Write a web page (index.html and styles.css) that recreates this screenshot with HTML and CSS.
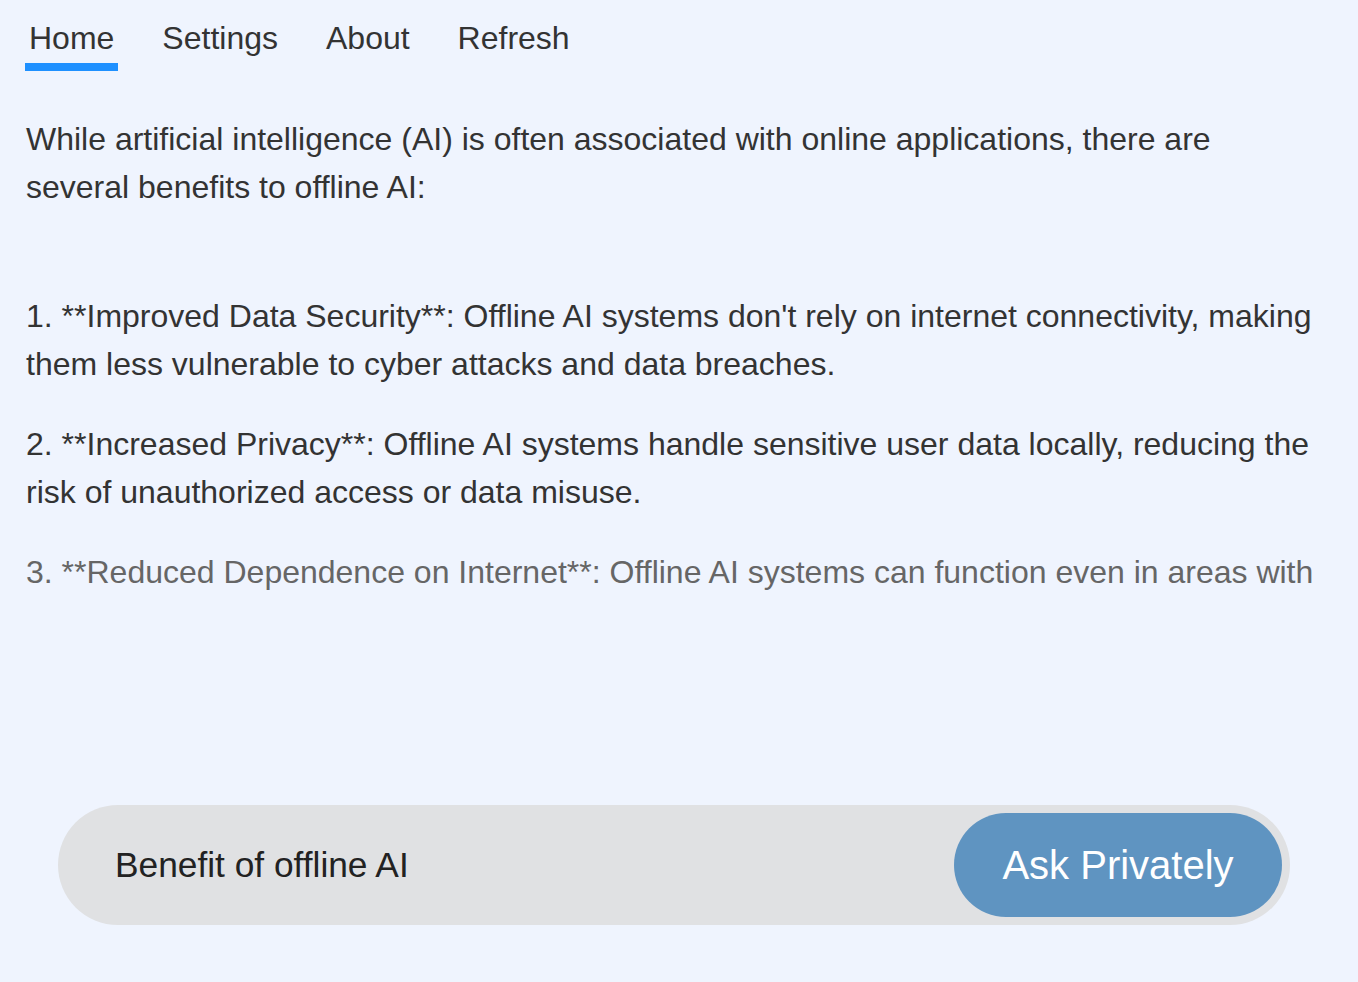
FILE: index.html
```html
<!DOCTYPE html>
<html lang="en">
<head>
<meta charset="utf-8">
<title>Offline AI</title>
<link rel="stylesheet" href="styles.css">
</head>
<body>
<div class="app">
  <nav class="tabs">
    <a class="tab active">Home</a>
    <a class="tab">Settings</a>
    <a class="tab">About</a>
    <a class="tab">Refresh</a>
  </nav>
  <main class="answer">
    <p class="intro">While artificial intelligence (AI) is often associated with online applications, there are several benefits to offline AI:</p>
    <p>1. **Improved Data Security**: Offline AI systems don't rely on internet connectivity, making them less vulnerable to cyber attacks and data breaches.</p>
    <p>2. **Increased Privacy**: Offline AI systems handle sensitive user data locally, reducing the risk of unauthorized access or data misuse.</p>
    <p class="fading">3. **Reduced Dependence on Internet**: Offline AI systems can function even in areas with</p>
  </main>
  <footer class="composer">
    <div class="ask-bar">
      <span class="query">Benefit of offline AI</span>
      <button class="ask-btn">Ask Privately</button>
    </div>
  </footer>
</div>
</body>
</html>
```

FILE: styles.css
```css
html, body {
  margin: 0;
  padding: 0;
  background: #eff4fe;
}
body {
  font-family: "Liberation Sans", Arial, sans-serif;
  color: #333333;
}
.app {
  height: 982px;
  display: flex;
  flex-direction: column;
  box-sizing: border-box;
}
.tabs {
  display: flex;
  gap: 40px;
  padding: 20px 0 0 25px;
}
.tab {
  display: block;
  font-size: 32px;
  line-height: 37px;
  padding: 0 4px 6px;
  border-bottom: 8px solid transparent;
  color: #333333;
}
.tab.active {
  border-bottom-color: #1e90ff;
}
.answer {
  flex: 1;
  padding: 44px 40px 0 26px;
}
.answer p {
  margin: 0 0 32px;
  font-size: 32px;
  line-height: 48px;
}
.answer p.intro {
  margin-bottom: 81px;
}
.answer p.fading {
  color: #666666;
}
.composer {
  padding: 0 68px 57px 58px;
}
.ask-bar {
  height: 120px;
  box-sizing: border-box;
  background: #e0e1e3;
  border-radius: 60px;
  display: flex;
  align-items: center;
  justify-content: space-between;
  padding: 8px 8px 8px 57px;
}
.query {
  font-size: 35.3px;
  color: #222222;
}
.ask-btn {
  height: 104px;
  width: 328px;
  border: none;
  border-radius: 52px;
  background: #5f94c1;
  color: #ffffff;
  font-family: "Liberation Sans", Arial, sans-serif;
  font-size: 40px;
  padding: 0;
}
```
